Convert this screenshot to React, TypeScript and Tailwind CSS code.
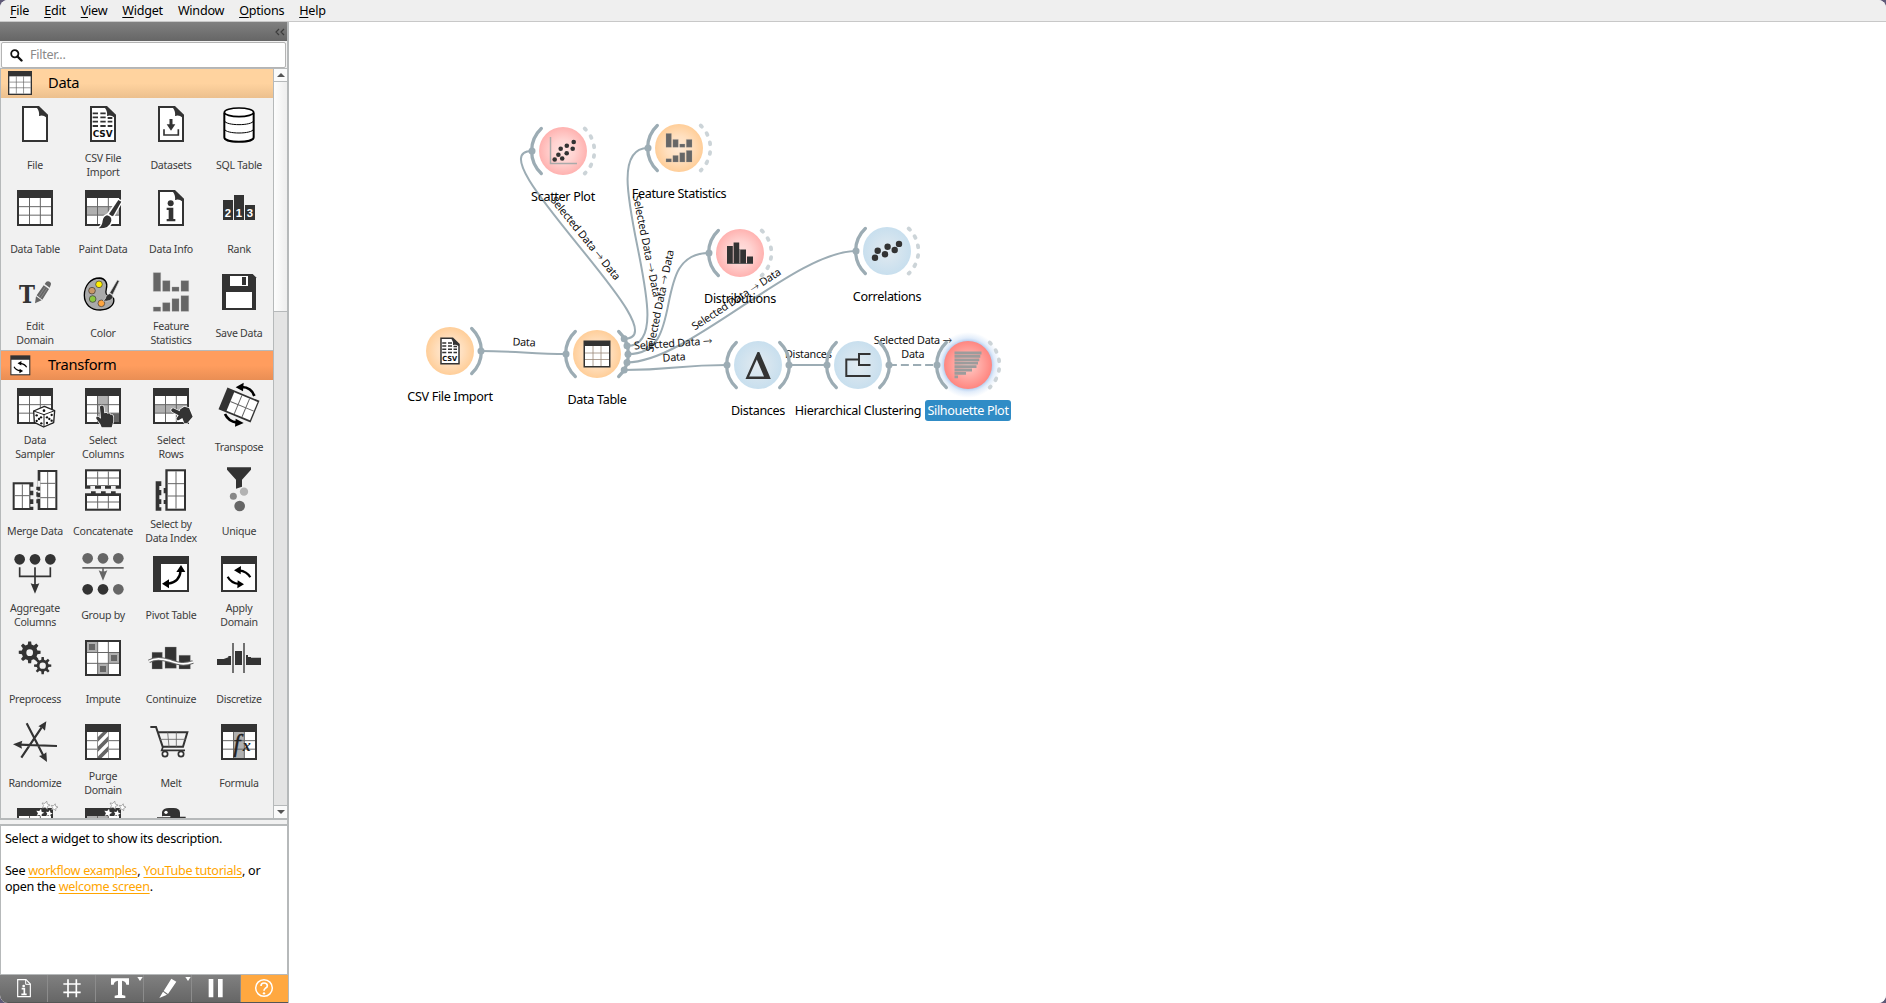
import React from "react";

const D = "#333333";
const G = "#666666";
const L = "#b0b0b0";

type Kids = { children?: React.ReactNode };

function Icon({ children, size = 48 }: Kids & { size?: number }) {
  return (
    <svg width={size} height={size} viewBox="0 0 144 144" className="block shrink-0 overflow-visible">
      {children}
    </svg>
  );
}

/* 3x3 spreadsheet with a dark header; children are painted under the grid lines */
function Sheet({ children }: Kids) {
  return (
    <g>
      <rect x="18" y="18" width="108" height="108" fill={D} />
      <rect x="24" y="42" width="96" height="78" fill="#fff" />
      {children}
      <path d="M55.5 42V120M88 42V120M24 68H120M24 93.5H120" stroke={G} strokeWidth="3" fill="none" />
    </g>
  );
}

function Doc({ children }: Kids) {
  return (
    <g>
      <path d="M33 18H84L111 44V126H33Z" fill={D} />
      <path d="M39 24H78Q86 34 84 48Q97 44 105 52V120H39Z" fill="#fff" />
      {children}
    </g>
  );
}

const CsvDoc = () => (
  <Doc>
    <path
      d="M41 40H57M64 40H80M41 52H57M64 52H80M86 54H100M41 65H57M64 65H80M86 65H100M41 78H57M64 78H80M86 78H100"
      stroke={D}
      strokeWidth="5.5"
    />
    <text x="71" y="112" textAnchor="middle" textLength="60" lengthAdjust="spacingAndGlyphs" fontFamily="DejaVu Sans" fontWeight="bold" fontSize="28" letterSpacing="0" fill="#111">
      CSV
    </text>
  </Doc>
);

const Brush = () => (
  <g>
    <path d="M118 48L127 53L100 101L86 93Z M84 93Q98 96 98 108Q96 132 58 133Q70 126 71 110Q74 96 84 93Z" fill={D} stroke="#fff" strokeWidth="8" strokeLinejoin="round" />
    <path d="M118 48L127 53L102 97L90 90Z" fill={D} />
    <path d="M84 94Q98 97 97 110Q92 134 58 133Q70 126 71 110Q74 97 84 94Z" fill={D} />
  </g>
);

const Hand = () => (
  <path
    d="M64 72Q70 68 74 74L76 94Q82 90 86 95Q92 92 94 98Q102 96 103 106V118L98 136H68L64 126L52 110Q50 102 58 104L66 110L63 76Z"
    fill={D}
    stroke="#fff"
    strokeWidth="4"
    strokeLinejoin="round"
    paintOrder="stroke"
  />
);

const Bars = () => (
  <path
    fill={G}
    stroke="#999"
    strokeWidth="1"
    d="M19 14H41V70H19ZM47 38H69V70H47ZM75 57H96V70H75ZM102 38H125V70H102ZM19 117H41V130H19ZM47 104H69V130H47ZM75 92H96V130H75ZM102 83H125V130H102Z"
  />
);

const Cycle = () => (
  <g>
    <path d="M106 82Q96 64 72 61M38 80Q48 99 72 102" stroke="#000" strokeWidth="6.5" fill="none" />
    <path d="M57 61L78 48L77 73ZM87 103L68 91L67 115Z" fill="#000" />
  </g>
);

function gear(cx: number, cy: number, r: number, inner: number, teeth: number) {
  let d = "";
  for (let i = 0; i < teeth; i++) {
    const a = (i / teeth) * Math.PI * 2 - Math.PI / 2;
    const s = Math.PI / teeth;
    const pts = [
      [inner, a - s * 0.6],
      [r, a - s * 0.34],
      [r, a + s * 0.34],
      [inner, a + s * 0.6],
    ];
    pts.forEach(([q, t], j) => {
      d += `${i === 0 && j === 0 ? "M" : "L"}${(cx + q * Math.cos(t)).toFixed(1)} ${(cy + q * Math.sin(t)).toFixed(1)}`;
    });
  }
  return d + "Z";
}

const star = (x: number, y: number, r: number) => {
  let d = "";
  for (let i = 0; i < 10; i++) {
    const q = i % 2 ? r * 0.48 : r;
    const a = (i * Math.PI) / 5 - Math.PI / 2 + 0.25;
    d += `${i ? "L" : "M"}${(x + q * Math.cos(a)).toFixed(1)} ${(y + q * Math.sin(a)).toFixed(1)}`;
  }
  return d + "Z";
};

const Stars = () => (
  <g fill="#fff">
    <path d={star(104, 10, 13) + star(130, 16, 11)} stroke="#888" strokeWidth="2" />
    <path d={star(87, 33, 13) + star(114, 35, 11)} />
  </g>
);

const icons: Record<string, React.ReactNode> = {
  File: <Doc />,
  "CSV File Import": <CsvDoc />,
  Datasets: (
    <Doc>
      <path d="M72 57V76" stroke={D} strokeWidth="9" />
      <path d="M59 73H85L72 92Z" fill={D} />
      <path d="M51 88V105H94V88" stroke={D} strokeWidth="5" fill="none" />
    </Doc>
  ),
  "SQL Table": (
    <g fill="none" stroke="#000">
      <path d="M28 38V112C28 130 116 130 116 112V38" fill="#fff" strokeWidth="6" />
      <ellipse cx="72" cy="37" rx="44" ry="13" fill="#fff" strokeWidth="5" />
      <path d="M28 62C32 78 112 78 116 62M28 87C32 103 112 103 116 87" strokeWidth="3" />
    </g>
  ),
  "Data Table": <Sheet />,
  "Paint Data": (
    <g>
      <Sheet>
        <path d="M24 68H120V93H24Z" fill={L} />
      </Sheet>
      <Brush />
    </g>
  ),
  "Data Info": (
    <Doc>
      <circle cx="71" cy="58" r="9" fill={D} />
      <path d="M59 71H79V105H85V112H59V105H65V78H59Z" fill={D} />
    </Doc>
  ),
  Rank: (
    <g>
      <path d="M24 48H54V108H24ZM57 33H87V108H57ZM90 63H120V108H90Z" fill={D} />
      <g fill="#fff" fontFamily="Liberation Sans" fontWeight="bold" fontSize="34" textAnchor="middle">
        <text x="39" y="98">2</text>
        <text x="72" y="98">1</text>
        <text x="105" y="98">3</text>
      </g>
    </g>
  ),
  "Edit Domain": (
    <g>
      <text x="24" y="106" textLength="48" lengthAdjust="spacingAndGlyphs" fontFamily="DejaVu Serif" fontWeight="bold" fontSize="75" fill={D}>
        T
      </text>
      <path d="M72 106L75 85L92 97Z M77 82L98 52L114 63L94 95Z M101 48L106 41Q112 37 118 43Q122 47 119 52L116 59Z" fill={G} />
      <path d="M83 86L102 58M89 90L108 62" stroke="#999" strokeWidth="2" />
    </g>
  ),
  Color: (
    <g>
      <path d="M62 30C34 30 16 54 16 82C16 108 34 126 64 126C88 126 108 112 104 92C101 82 88 88 82 78C76 66 90 56 80 40Q74 31 62 30Z" fill="#aaaaaa" stroke="#000" strokeWidth="4" />
      <g stroke="#333" strokeWidth="2">
        <circle cx="60" cy="49" r="10" fill="#ffee00" />
        <circle cx="39" cy="68" r="10" fill="#c89868" />
        <circle cx="41" cy="93" r="10" fill="#8cc840" />
        <circle cx="67" cy="106" r="10" fill="#ffa540" />
      </g>
      <path d="M115 36L121 39L101 80L92 75ZM92 77Q102 80 102 88Q96 102 72 99Q80 94 81 86Q84 78 92 77Z" fill={D} stroke="#ddd" strokeWidth="2" />
    </g>
  ),
  "Feature Statistics": <Bars />,
  "Save Data": (
    <g>
      <path d="M21 18H113L123 28V126H21Z" fill={D} />
      <path d="M45 24H99V54H45ZM33 72H111V120H33Z" fill="#fff" />
      <path d="M81 27H93V51H81Z" fill={D} />
    </g>
  ),
  "Data Sampler": (
    <g>
      <Sheet />
      <path d="M100 73L131 86L128 122L98 135L70 121L68 87Z" fill="#fff" stroke="#222" strokeWidth="4" strokeLinejoin="round" />
      <path d="M68 87L99 98L131 86M99 98V135" stroke="#222" strokeWidth="3" fill="none" />
      <g fill="#111">
        <circle cx="99" cy="86" r="4" />
        <circle cx="77" cy="100" r="3.5" />
        <circle cx="90" cy="106" r="3.5" />
        <circle cx="84" cy="111" r="3.5" />
        <circle cx="77" cy="117" r="3.5" />
        <circle cx="91" cy="124" r="3.5" />
        <circle cx="108" cy="106" r="3.5" />
        <circle cx="122" cy="99" r="3.5" />
        <circle cx="115" cy="111" r="3.5" />
        <circle cx="108" cy="123" r="3.5" />
        <circle cx="122" cy="116" r="3.5" />
      </g>
    </g>
  ),
  "Select Columns": (
    <g>
      <Sheet>
        <path d="M56 42H88V120H56Z" fill={L} />
        <path d="M88 94H120V120H88Z" fill={G} />
      </Sheet>
      <Hand />
    </g>
  ),
  "Select Rows": (
    <g>
      <Sheet>
        <path d="M24 68H120V93H24Z" fill={L} />
      </Sheet>
      <path
        d="M74 80Q70 86 76 90L95 100L88 110Q89 117 96 114L106 108L112 123H121L137 104L126 78L112 74L100 82L98 88L79 79Z"
        fill={D}
        stroke="#fff"
        strokeWidth="4"
        strokeLinejoin="round"
        paintOrder="stroke"
      />
    </g>
  ),
  Transpose: (
    <g>
      <g transform="rotate(22.5 72 69)">
        <rect x="20" y="34" width="104" height="70" fill={D} />
        <rect x="44" y="39" width="76" height="60" fill="#fff" />
        <path d="M69 39V99M94 39V99M44 69H120" stroke={G} strokeWidth="3" />
      </g>
      <path d="M118 42Q110 16 80 15M30 96Q40 118 66 122" stroke="#000" strokeWidth="8" fill="none" />
      <path d="M62 16L86 2L84 28ZM86 123L62 110L60 134Z" fill="#000" />
    </g>
  ),
  "Merge Data": (
    <g>
      <path d="M5 49H67V62H58V74H67V88H58V100H67V114H58V122H67V132H5Z" fill={D} />
      <path d="M11 55H55V126H11Z" fill="#fff" />
      <path d="M34 55V126M11 89H55" stroke={G} strokeWidth="3" />
      <path d="M80 12H139V132H80V112H76V100H80V92H76V78H80V72H76V62H80Z" fill={D} />
      <path d="M88 18H133V126H88Z" fill="#fff" />
      <path d="M80 44H88V62H80ZM80 74H88V80H80ZM80 94H88V98H80Z" fill="#f1f1f1" />
      <path d="M110 18V126M88 52H133M88 95H133" stroke={G} strokeWidth="3" />
    </g>
  ),
  Concatenate: (
    <g>
      <path d="M18 10H126V68H110V60H96V68H78V60H66V68H48V60H34V68H18Z" fill={D} />
      <path d="M24 16H120V58H24Z" fill="#fff" />
      <path d="M56 16V58M88 16V58M24 36H120" stroke={G} strokeWidth="3" />
      <path d="M18 82H36V76H50V82H66V76H80V82H96V76H110V82H126V134H18Z" fill={D} />
      <path d="M24 90H120V128H24Z" fill="#fff" />
      <path d="M56 90V128M88 90V128M24 108H120" stroke={G} strokeWidth="3" />
    </g>
  ),
  "Select by Data Index": (
    <g>
      <path d="M26 46H43V60H37V72H43V88H37V100H43V114H37V124H43V134H26Z" fill={D} />
      <path d="M55 10H117V134H55V114H50V102H55V82H50V66H55Z" fill={D} />
      <path d="M62 16H111V128H62Z" fill="#fff" />
      <path d="M87 16V128M62 53H111M62 90H111" stroke={G} strokeWidth="3" />
    </g>
  ),
  Unique: (
    <g>
      <path d="M36 4H108V11L81 41V62L63 68V41L36 11Z" fill={D} />
      <circle cx="87" cy="77" r="12.5" fill="#b3b3b3" />
      <circle cx="55" cy="91" r="10.5" fill="#888" />
      <circle cx="74" cy="120" r="16" fill={G} />
    </g>
  ),
  "Aggregate Columns": (
    <g fill={D}>
      <circle cx="26" cy="28" r="16" />
      <circle cx="72" cy="28" r="16" />
      <circle cx="118" cy="28" r="16" />
      <path d="M26 52V79H118V52M72 52V106" stroke={D} strokeWidth="5" fill="none" />
      <path d="M59 100Q72 106 85 100L72 131Z" />
    </g>
  ),
  "Group by": (
    <g fill={G}>
      <circle cx="26" cy="25" r="16" />
      <circle cx="72" cy="25" r="16" />
      <circle cx="118" cy="25" r="16" />
      <path d="M10 53.5H134M72 53V68" stroke={G} strokeWidth="5" />
      <path d="M59 61Q72 68 85 61L72 92Z" />
      <circle cx="26" cy="118" r="16" fill={D} />
      <circle cx="72" cy="118" r="16" fill={D} />
      <circle cx="118" cy="118" r="16" />
    </g>
  ),
  "Pivot Table": (
    <g>
      <path d="M18 18H126V126H18Z" fill={D} />
      <path d="M42 42H120V120H42Z" fill="#fff" />
      <path d="M101 62Q98 96 64 101" stroke="#000" strokeWidth="7" fill="none" />
      <path d="M102 45L115 66H88ZM45 101L66 88V115Z" fill="#000" />
    </g>
  ),
  "Apply Domain": (
    <g>
      <path d="M18 18H126V126H18Z" fill={D} />
      <path d="M24 42H120V120H24Z" fill="#fff" />
      <Cycle />
    </g>
  ),
  Preprocess: (
    <g fill={D}>
      <path d={gear(56, 55, 33, 24, 8)} />
      <circle cx="56" cy="56" r="10" fill="#f1f1f1" />
      <path d={gear(95, 95, 26, 18, 8)} />
      <circle cx="95" cy="95" r="9.5" fill="#f1f1f1" />
    </g>
  ),
  Impute: (
    <g>
      <path d="M18 18H126V126H18Z" fill={D} />
      <path d="M24 24H120V120H24Z" fill="#fff" />
      <path d="M24 24H55V55H24ZM89 56H120V87H89ZM56 89H87V120H56Z" fill={L} />
      <path d="M56 24V120M88 24V120M24 55.5H120M24 88H120" stroke={G} strokeWidth="3" />
      <path d="M30 30H48V48H30ZM96 63H114V81H96ZM63 96H81V114H63Z" fill={G} />
    </g>
  ),
  Continuize: (
    <g>
      <path d="M15 55H46V105H15ZM54 39H88V103H54ZM96 64H130V105H96Z" fill={D} stroke="#999" strokeWidth="1" />
      <path d="M6 82C26 70 46 74 66 80S106 96 138 84" stroke={G} strokeWidth="11" fill="none" />
      <path d="M6 82C26 70 46 74 66 80S106 96 138 84" stroke="#fff" strokeWidth="5" fill="none" />
    </g>
  ),
  Discretize: (
    <g>
      <path d="M6 75H26L40 70V66H48V93H6ZM60 51H81V93H60ZM93 63H99V69H108V71H138V93H93Z" fill={D} />
      <path d="M54 27V117M87 27V117" stroke={G} strokeWidth="5.5" />
    </g>
  ),
  Randomize: (
    <g fill={D}>
      <path d="M47 16L98 115M31 119L92 28M138 84L24 80" stroke={D} strokeWidth="6.5" />
      <path d="M108 132L84 114Q98 112 106 103ZM106 10L102 38Q94 28 82 25ZM6 79L34 68Q28 80 33 92Z" />
    </g>
  ),
  "Purge Domain": (
    <g>
      <Sheet />
      <path d="M56 42H88V120H56Z" fill="#fff" />
      <path d="M56 58L72 42H86L56 72ZM56 86L88 54V70L56 102ZM56 116L88 84V100L68 120H56Z" fill={G} />
    </g>
  ),
  Melt: (
    <g fill="none" stroke={D}>
      <path d="M10 27H27L47 86H108L121 43H32" strokeWidth="6" />
      <path d="M62 43L66 86M88 43V86M38 64H116" strokeWidth="2.5" stroke={G} />
      <path d="M48 86L44 97H114" strokeWidth="5" />
      <circle cx="54" cy="108" r="8" strokeWidth="5" fill="#fff" />
      <circle cx="102" cy="108" r="8" strokeWidth="5" fill="#fff" />
    </g>
  ),
  Formula: (
    <g>
      <Sheet>
        <path d="M56 42H88V120H56Z" fill={L} />
      </Sheet>
      <g fill="#222" fontFamily="Liberation Serif" fontStyle="italic">
        <text x="55" y="101" fontSize="78" stroke="#222" strokeWidth="1">f</text>
        <text x="83" y="100" fontSize="48" fontWeight="bold">x</text>
      </g>
    </g>
  ),
  FeatureConstructor: (
    <g>
      <Sheet />
      <Stars />
    </g>
  ),
  CreateInstance: (
    <g>
      <Sheet>
        <path d="M24 42H88V68H24Z" fill={L} />
      </Sheet>
      <Stars />
    </g>
  ),
  PythonScript: (
    <g>
      <path d="M45 46V30Q48 18 66 18H80Q98 18 99 32V44H116V60H30V46H70V42H46Z" fill={D} />
      <circle cx="57" cy="31" r="5" fill="#fff" />
    </g>
  ),
};

type Widget = { icon: string; lines: string[] };
const w = (icon: string, ...lines: string[]): Widget => ({ icon, lines: lines.length ? lines : [icon] });

const dataWidgets = [
  w("File"), w("CSV File Import", "CSV File", "Import"), w("Datasets"), w("SQL Table"),
  w("Data Table"), w("Paint Data"), w("Data Info"), w("Rank"),
  w("Edit Domain", "Edit", "Domain"), w("Color"), w("Feature Statistics", "Feature", "Statistics"), w("Save Data"),
];
const transformWidgets = [
  w("Data Sampler", "Data", "Sampler"), w("Select Columns", "Select", "Columns"), w("Select Rows", "Select", "Rows"), w("Transpose"),
  w("Merge Data"), w("Concatenate"), w("Select by Data Index", "Select by", "Data Index"), w("Unique"),
  w("Aggregate Columns", "Aggregate", "Columns"), w("Group by"), w("Pivot Table"), w("Apply Domain", "Apply", "Domain"),
  w("Preprocess"), w("Impute"), w("Continuize"), w("Discretize"),
  w("Randomize"), w("Purge Domain", "Purge", "Domain"), w("Melt"), w("Formula"),
  w("FeatureConstructor", ""), w("CreateInstance", ""), w("PythonScript", ""),
];

function WidgetGrid({ items }: { items: Widget[] }) {
  return (
    <div className="grid grid-cols-[repeat(4,68px)] auto-rows-[84px] bg-[#f1f1f1]">
      {items.map((it) => (
        <div key={it.icon} className="flex flex-col items-center pt-[2px]">
          <Icon>{icons[it.icon]}</Icon>
          <div className="flex h-[34px] flex-col items-center justify-center whitespace-nowrap text-[10.6px] leading-[14px] tracking-[-0.27px] text-[#3c3c3c]">
            {it.lines.map((l) => (
              <span key={l}>{l}</span>
            ))}
          </div>
        </div>
      ))}
    </div>
  );
}

/* ---------- canvas ---------- */

type Tone = "data" | "viz" | "unsup" | "selected";
type NodeSpec = { name: string; x: number; y: number; tone: Tone; input: boolean; output: "none" | "free" | "linked" | "fan"; glyph: React.ReactNode };

const sheetGlyph = (
  <g>
    <rect x="-13.5" y="-13.5" width="27" height="27" fill={D} />
    <rect x="-12" y="-8" width="24" height="20" fill="#fff" />
    <path d="M-4 -8V12M4 -8V12M-12 -1H12M-12 5.5H12" stroke="#9a8878" strokeWidth="0.8" />
  </g>
);

const dots = (pts: number[][], r: number) => (
  <g fill={D}>
    {pts.map(([x, y]) => (
      <circle key={`${x},${y}`} cx={x} cy={y} r={r} />
    ))}
  </g>
);

const nodes: NodeSpec[] = [
  { name: "CSV File Import", x: 450, y: 351, tone: "data", input: false, output: "linked", glyph: <g transform="scale(.25) translate(-72 -72)"><CsvDoc /></g> },
  { name: "Data Table", x: 597, y: 354, tone: "data", input: true, output: "fan", glyph: sheetGlyph },
  {
    name: "Scatter Plot", x: 563, y: 151, tone: "viz", input: true, output: "free",
    glyph: (
      <g>
        <path d="M-12.5 -14V12.5H14" stroke="#aaa" strokeWidth="1.5" fill="none" />
        {dots([[-8.3, 8.5], [-4.6, 3.8], [-0.8, 7.5], [-2.3, -2.2], [3.7, 2.2], [3.8, -5.3], [9.7, -2.2], [10.7, -9]], 2.3)}
      </g>
    ),
  },
  { name: "Feature Statistics", x: 679, y: 148, tone: "data", input: true, output: "free", glyph: <g transform="scale(.245) translate(-72 -73)"><Bars /></g> },
  {
    name: "Distributions", x: 740, y: 253, tone: "viz", input: true, output: "free",
    glyph: (
      <g fill={D}>
        <path d="M-13 -7H-7.2V11H-13ZM-6.4 -10.5H-.8V11H-6.4ZM.2 -3.5H6V11H.2ZM7 3.5H13V11H7Z" />
        <path d="M-13 10.5H13M-.4 -4V11" stroke={G} strokeWidth="0.8" />
      </g>
    ),
  },
  {
    name: "Correlations", x: 887, y: 251, tone: "unsup", input: true, output: "free",
    glyph: dots([[-12, 6.8], [-9.3, -0.3], [-2, 3.3], [0.6, -4.2], [7.7, -1], [12, -7.1]], 3.2),
  },
  { name: "Distances", x: 758, y: 365, tone: "unsup", input: true, output: "linked", glyph: <path fillRule="evenodd" d="M-.5 -13H1.3L12.8 14H-12.5ZM-1.2 -5.5L-8.8 11.5H6Z" fill={D} /> },
  { name: "Hierarchical Clustering", x: 858, y: 365, tone: "unsup", input: true, output: "linked", glyph: <path d="M12.5 -11H1V0H12.5M1 -5.5H-11.7V11H12.5" stroke={D} strokeWidth="2" fill="none" /> },
  {
    name: "Silhouette Plot", x: 968, y: 365, tone: "selected", input: true, output: "free",
    glyph: <path d="M-13.5 -12H13.5M-13.5 -8.6H12.3M-13.5 -5.2H11.3M-13.5 -1.8H10M-13.5 1.6H8.5M-13.5 5H4M-13.5 8.4H-2M-13.5 11.8H-10" stroke="#9c9c9c" strokeWidth="2.8" />,
  },
];

const ARC_L = "M-21.7 -22.5A31 31 0 0 0 -21.7 22.5";
const ARC_R = "M21.7 -22.5A31 31 0 0 1 21.7 22.5";
const LINE = "#9cacb4";
const fan = [[27.2, -15.3], [30, -8.2], [31, 0.2], [30, 8.4], [27.2, 16]];

function NodeView({ n }: { n: NodeSpec }) {
  const sel = n.tone === "selected";
  return (
    <div className="absolute flex h-[80px] w-[80px] flex-col items-center" style={{ left: n.x - 289 - 40, top: n.y - 22 - 40 }}>
      <svg width="80" height="80" viewBox="-40 -40 80 80" className="block shrink-0 overflow-visible">
        {sel && <circle r="33" fill="url(#glow)" />}
        <circle r="24" fill={`url(#${n.tone})`} />
        {n.glyph}
        <g fill="none" stroke={LINE} strokeWidth="3.3" strokeLinecap="round">
          {n.input && <path d={ARC_L} />}
          {n.output !== "none" && n.output !== "free" && <path d={ARC_R} />}
          {n.output === "free" && <path d={ARC_R} stroke="#ccd4d8" strokeWidth="3.8" strokeDasharray="1.8 7.95" />}
        </g>
        <g fill={LINE}>
          {n.input && <circle cx="-31" r="3.5" />}
          {n.output === "linked" && <circle cx="31" r="3.5" />}
          {n.output === "fan" && fan.map(([x, y]) => <circle key={y} cx={x} cy={y} r="3.5" />)}
        </g>
      </svg>
      <span
        className={
          sel
            ? "mt-[-5px] flex h-[21px] shrink-0 items-center whitespace-nowrap rounded-[3px] bg-[#308cc6] px-[2px] pt-[2px] text-[12.6px] tracking-[-0.33px] text-white"
            : "mt-[-5px] flex h-[21px] shrink-0 items-center whitespace-nowrap px-[2px] pt-[2px] text-[12.6px] tracking-[-0.33px] text-black"
        }
      >
        {n.name}
      </span>
    </div>
  );
}

type LinkSpec = { a: number[]; b: number[]; d?: number; dash?: boolean; lines: string[]; angle: number; at: number[] };
const links: LinkSpec[] = [
  { a: [481, 351], b: [566, 354], d: 30, lines: ["Data"], angle: 2, at: [524, 342] },
  { a: [624, 338.7], b: [532, 151], lines: ["Selected Data → Data"], angle: 51, at: [585.7, 238] },
  { a: [627, 345.8], b: [648, 148], lines: ["Selected Data → Data"], angle: 78.5, at: [647, 246] },
  { a: [628, 354.2], b: [709, 253], lines: ["Selected Data → Data"], angle: -78.3, at: [659.5, 301] },
  { a: [627, 362.4], b: [856, 251], lines: ["Selected Data → Data"], angle: -33, at: [736, 299] },
  { a: [624, 370], b: [727, 365], d: 50, lines: ["Selected Data →", "Data"], angle: -3.8, at: [673.5, 350] },
  { a: [789, 365], b: [827, 365], d: 10, lines: ["Distances"], angle: 0, at: [808.3, 354] },
  { a: [889, 365], b: [937, 365], d: 10, dash: true, lines: ["Selected Data →", "Data"], angle: 0, at: [912.8, 347] },
];

function Canvas() {
  return (
    <main className="relative min-w-0 flex-1 overflow-hidden bg-white">
      <svg width="1597" height="981" viewBox="289 22 1597 981" className="absolute left-0 top-0">
        <defs>
          <radialGradient id="data"><stop offset="0" stopColor="#ffead6" /><stop offset="0.5" stopColor="#ffe0c0" /><stop offset="1" stopColor="#ffce99" /></radialGradient>
          <radialGradient id="viz"><stop offset="0" stopColor="#ffe4e2" /><stop offset="0.5" stopColor="#ffd2d0" /><stop offset="1" stopColor="#ffb2b0" /></radialGradient>
          <radialGradient id="unsup"><stop offset="0" stopColor="#e2eaf0" /><stop offset="1" stopColor="#c8dfee" /></radialGradient>
          <radialGradient id="selected"><stop offset="0" stopColor="#ffcfca" /><stop offset="1" stopColor="#ff8680" /></radialGradient>
          <radialGradient id="glow"><stop offset="0.7" stopColor="#7fa8e0" stopOpacity="0.65" /><stop offset="0.82" stopColor="#8fb8ec" stopOpacity="0.26" /><stop offset="1" stopColor="#a0c4f0" stopOpacity="0" /></radialGradient>
        </defs>
        {links.map((l, i) => {
          const d = l.d ?? 61;
          return (
            <path
              key={i}
              d={`M${l.a[0]} ${l.a[1]}C${l.a[0] + d} ${l.a[1]} ${l.b[0] - d} ${l.b[1]} ${l.b[0]} ${l.b[1]}`}
              fill="none"
              stroke={LINE}
              strokeWidth="2"
              strokeDasharray={l.dash ? "8 4" : undefined}
            />
          );
        })}
        {links.map((l, i) => (
          <g key={i} transform={`translate(${l.at[0]} ${l.at[1]}) rotate(${l.angle})`} fontSize="10.8" letterSpacing="-0.25" textAnchor="middle" fill="#111">
            {l.lines.map((t, j) => (
              <text key={j} y={4 + (j - (l.lines.length - 1) / 2) * 14}>
                {t.split("→").map((part, k) => (
                  <React.Fragment key={k}>
                    {k > 0 && <tspan fontFamily="DejaVu Sans" fontWeight="200" fontSize="11.5">→</tspan>}
                    {part}
                  </React.Fragment>
                ))}
              </text>
            ))}
          </g>
        ))}
      </svg>
      {nodes.map((n) => (
        <NodeView key={n.name} n={n} />
      ))}
    </main>
  );
}

/* ---------- chrome ---------- */

function MenuBar() {
  const items = [["F", "ile"], ["E", "dit"], ["V", "iew"], ["W", "idget"], ["", "Window"], ["O", "ptions"], ["H", "elp"]];
  return (
    <nav className="flex h-[22px] shrink-0 items-center gap-[15px] border-b border-[#c8c8c8] bg-[#efefef] pl-[10px] text-[12.6px] leading-[20px] tracking-[-0.25px] text-black">
      {items.map(([u, rest]) => (
        <span key={rest}>
          <span className="underline underline-offset-2">{u}</span>
          {rest}
        </span>
      ))}
    </nav>
  );
}

function ToolButton({ children, active, last }: Kids & { active?: boolean; last?: boolean }) {
  return (
    <button
      className={
        active
          ? "flex h-[27px] w-[47px] items-center justify-center bg-[#ffa840]"
          : last
            ? "flex h-[27px] w-[49px] items-center justify-center border-r border-[#8c8c8c]"
            : "flex h-[27px] w-[48px] items-center justify-center border-r border-[#8c8c8c]"
      }
    >
      <svg width="48" height="27" viewBox="0 0 144 81" className="shrink-0" fill="none" stroke="#fff">
        {children}
      </svg>
    </button>
  );
}

function Section({ title, icon, size, className }: { title: string; icon: string; size: number; className: string }) {
  return (
    <div className={className}>
      <div className="flex w-[38px] justify-center overflow-visible pb-[1px]">
        <Icon size={size}>{icons[icon]}</Icon>
      </div>
      <span className="ml-[9px] pb-[3px] tracking-[-0.3px]">{title}</span>
    </div>
  );
}

function Sidebar() {
  return (
    <aside className="flex w-[289px] shrink-0 flex-col border-r-2 border-[#b6b9ba] bg-[#f1f1f1]">
      <div className="flex h-[19px] shrink-0 items-center justify-end bg-linear-to-b from-[#808080] to-[#666666] pr-[2px]">
        <svg width="10" height="8" viewBox="0 0 10 8" fill="none" stroke="#3c3c3c" strokeWidth="1.2">
          <path d="M4 1L1 4L4 7M9 1L6 4L9 7" />
        </svg>
      </div>
      <div className="mx-[1px] mt-[1px] flex h-[26px] shrink-0 items-center rounded-[2px] border border-[#b4b4b4] bg-white text-[12.6px] tracking-[-0.27px] text-[#8a8a8a]">
        <svg width="13" height="13" viewBox="0 0 13 13" fill="none" stroke="#111" className="ml-[8px] mr-[7px]">
          <circle cx="4.8" cy="4.8" r="3.6" strokeWidth="1.8" />
          <path d="M7.5 7.5L11.5 11.5" strokeWidth="2.4" strokeLinecap="round" />
        </svg>
        Filter...
      </div>
      <div className="flex h-[751px] shrink-0 overflow-hidden border-b border-l border-t border-[#b6b9ba]">
        <div className="w-[272px] shrink-0 overflow-hidden">
          <Section title="Data" icon="Data Table" size={32} className="flex h-[29px] items-center bg-linear-to-b from-[#ffd39f] from-50% to-[#ecc08e] text-[14.67px] text-black" />
          <WidgetGrid items={dataWidgets} />
          <Section title="Transform" icon="Apply Domain" size={26.67} className="flex h-[30px] items-center border-t border-[#b6b9ba] bg-linear-to-b from-[#ff9d5e] from-50% to-[#e98e54] text-[14.67px] text-black" />
          <WidgetGrid items={transformWidgets} />
        </div>
        <div className="flex w-[14px] shrink-0 flex-col border-l border-[#b6b9ba] bg-[#e4e4e4]">
          <div className="flex h-[13px] items-center justify-center border-b border-[#b6b9ba] bg-[#fafafa]">
            <svg width="8" height="4" viewBox="0 0 8 4"><path d="M0 4L4 0L8 4Z" fill="#555" /></svg>
          </div>
          <div className="h-[230px] border-b border-[#b6b9ba] bg-linear-to-r from-[#fdfdfd] to-[#eeeeee]" />
          <div className="flex-1" />
          <div className="flex h-[13px] items-center justify-center border-t border-[#b6b9ba] bg-[#fafafa]">
            <svg width="8" height="4" viewBox="0 0 8 4"><path d="M0 0L4 4L8 0Z" fill="#555" /></svg>
          </div>
        </div>
      </div>
      <div className="h-[5px] shrink-0 border-t border-[#b6b9ba]" />
      <div className="h-[151px] shrink-0 border-b border-l border-t-2 border-[#b6b9ba] bg-white pl-[4px] pt-[5px] text-[12.6px] leading-[16px] tracking-[-0.29px] text-black">
        <p>Select a widget to show its description.</p>
        <p className="mt-[16px] whitespace-nowrap">
          See <a className="text-[#ffa500] underline underline-offset-2">workflow examples</a>, <a className="text-[#ffa500] underline underline-offset-2">YouTube tutorials</a>, or
          <br />
          open the <a className="text-[#ffa500] underline underline-offset-2">welcome screen</a>.
        </p>
      </div>
      <div className="mr-[-1px] flex h-[28px] shrink-0 border-b border-[#555] bg-linear-to-b from-[#808080] to-[#666666]">
        <ToolButton>
          <path d="M53 14H78L91 27V65H53Z" strokeWidth="3.5" />
          <path d="M77 14V28H91" strokeWidth="3" />
          <circle cx="71" cy="33" r="4" fill="#fff" stroke="none" />
          <path d="M65 41H73V57M64 58H80" strokeWidth="5" />
        </ToolButton>
        <ToolButton>
          <path d="M46 27H98M46 52H98M60 13V67M85 13V67" strokeWidth="5" />
        </ToolButton>
        <ToolButton>
          <path d="M45 10H99V29H91Q90 18 78 17V60L88 62V69H56V62L66 60V17Q54 18 53 29H45Z" fill="#fff" stroke="none" />
          <path d="M124 6H140L132 18Z" fill="#fff" stroke="none" />
        </ToolButton>
        <ToolButton>
          <path d="M82 11L97 20L72 57L59 48ZM57 50L69 59L46 69Z" fill="#fff" stroke="none" />
          <path d="M124 6H140L132 18Z" fill="#fff" stroke="none" />
        </ToolButton>
        <ToolButton last>
          <path d="M57 12V67M85 12V67" strokeWidth="14" />
        </ToolButton>
        <ToolButton active>
          <circle cx="69" cy="39" r="25" strokeWidth="4.5" />
          <path d="M60 33Q60 24 69 24Q79 24 79 32Q79 37 73 40Q69 43 69 47" strokeWidth="5" />
          <circle cx="69" cy="55" r="3.5" fill="#fff" stroke="none" />
        </ToolButton>
      </div>
    </aside>
  );
}

export default function App() {
  return (
    <div className="h-[1003px] w-[1886px] overflow-hidden bg-[#5f5a78]">
      <div className="flex h-full flex-col overflow-hidden rounded-[8px] bg-white font-['Noto_Sans',sans-serif]">
        <MenuBar />
        <div className="flex min-h-0 flex-1">
          <Sidebar />
          <Canvas />
        </div>
      </div>
    </div>
  );
}
